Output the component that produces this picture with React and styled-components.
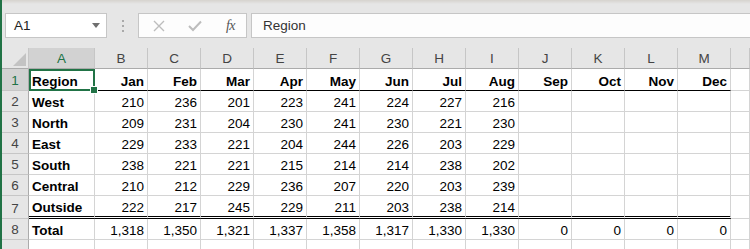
import styled, { createGlobalStyle } from "styled-components";

const GlobalStyle = createGlobalStyle`
  html, body {
    margin: 0;
    padding: 0;
    background: #e6e6e6;
  }
  body {
    font-family: "Liberation Sans", Arial, sans-serif;
  }
`;

const months = ["Jan", "Feb", "Mar", "Apr", "May", "Jun", "Jul", "Aug", "Sep", "Oct", "Nov", "Dec"];
const letters = ["A", "B", "C", "D", "E", "F", "G", "H", "I", "J", "K", "L", "M", ""];

const data = [
    ["West", 210, 236, 201, 223, 241, 224, 227, 216],
    ["North", 209, 231, 204, 230, 241, 230, 221, 230],
    ["East", 229, 233, 221, 204, 244, 226, 203, 229],
    ["South", 238, 221, 221, 215, 214, 214, 238, 202],
    ["Central", 210, 212, 229, 236, 207, 220, 203, 239],
    ["Outside", 222, 217, 245, 229, 211, 203, 238, 214],
];

const totals = ["1,318", "1,350", "1,321", "1,337", "1,358", "1,317", "1,330", "1,330", "0", "0", "0", "0"];

const App = () => {

    const rowHeights = [21, 22, 21, 21, 21, 21, 21, 23, 21, 30];

    return <>
        <GlobalStyle />
        <Window>
            <TopStrip />
            <FormulaBar>
                <NameBox>
                    <span>A1</span>
                    <svg width="8" height="5" viewBox="0 0 8 5">
                        <path d="M0 0 H8 L4 5 Z" fill="#6f6f6f" />
                    </svg>
                </NameBox>
                <Grip>
                    <i /><i /><i />
                </Grip>
                <ButtonBox>
                    <svg width="12" height="12" viewBox="0 0 12 12">
                        <path d="M1 1 L11 11 M11 1 L1 11" stroke="#bdbdbd" strokeWidth="1.4" />
                    </svg>
                    <svg width="14" height="12" viewBox="0 0 14 12">
                        <path d="M1 6 L5 10 L13 1.5" stroke="#bdbdbd" strokeWidth="2" fill="none" />
                    </svg>
                    <Fx>fx</Fx>
                </ButtonBox>
                <FormulaInput>Region</FormulaInput>
            </FormulaBar>

            <Sheet style={{ gridTemplateRows: rowHeights.map((h) => h + "px").join(" ") }}>
                <Corner>
                    <svg width="13" height="13" viewBox="0 0 13 13">
                        <path d="M13 0 V13 H0 Z" fill="#c3c3c3" />
                    </svg>
                </Corner>
                {letters.map((l, i) => (
                    <ColHead key={l + i} $active={i === 0}>{l}</ColHead>
                ))}

                <RowHead $active>1</RowHead>
                <Cell $bold $left $under="single">Region</Cell>
                {months.map((m) => (
                    <Cell key={m} $bold $under="single">{m}</Cell>
                ))}
                <Cell />

                {data.map((row, r) => (
                    <Row key={row[0]} row={row} num={r + 2} last={r === data.length - 1} />
                ))}

                <RowHead>8</RowHead>
                <Cell $bold $left>Total</Cell>
                {totals.map((t, i) => (
                    <Cell key={i}>{t}</Cell>
                ))}
                <Cell />

                <RowHead>9</RowHead>
                {letters.map((l, i) => <Cell key={i} />)}
            </Sheet>
            <Selection>
                <Handle />
            </Selection>
        </Window>
    </>
}

const Row = ({ row, num, last }) => {
    const under = last ? "double" : undefined;
    return <>
        <RowHead>{num}</RowHead>
        <Cell $bold $left $under={under}>{row[0]}</Cell>
        {row.slice(1).map((v, i) => (
            <Cell key={i} $under={under}>{v}</Cell>
        ))}
        {[0, 1, 2, 3].map((i) => <Cell key={"e" + i} $under={under} />)}
        <Cell />
    </>
}

export default App;

const Window = styled.div`
    position: relative;
    width: 750px;
    height: 249px;
    overflow: hidden;
    box-sizing: border-box;
    border-left: 2px solid #217346;
    background: #e6e6e6;
`

const TopStrip = styled.div`
    height: 4px;
    background: linear-gradient(#d6d3ce, #e6e6e6);
`

const FormulaBar = styled.div`
    display: flex;
    align-items: center;
    height: 25px;
    margin-top: 9px;
    margin-bottom: 10px;
    padding-left: 3px;
`

const NameBox = styled.div`
    box-sizing: border-box;
    width: 102px;
    height: 25px;
    display: flex;
    align-items: center;
    justify-content: space-between;
    padding: 0 6px 0 8px;
    background: #fff;
    border: 1px solid #c6c6c6;
    font-size: 13.5px;
    color: #222;
`

const Grip = styled.div`
    width: 31px;
    display: flex;
    flex-direction: column;
    align-items: center;
    gap: 3px;

    i {
        display: block;
        width: 2px;
        height: 2px;
        background: #a9a9a9;
    }
`

const ButtonBox = styled.div`
    box-sizing: border-box;
    width: 109px;
    height: 25px;
    display: flex;
    align-items: center;
    justify-content: space-between;
    padding: 0 11px 0 14px;
    background: #fdfdfd;
    border: 1px solid #c6c6c6;
`

const Fx = styled.span`
    font-family: "Liberation Serif", "Times New Roman", serif;
    font-style: italic;
    font-size: 14px;
    color: #555;
    letter-spacing: -0.5px;
`

const FormulaInput = styled.div`
    box-sizing: border-box;
    flex: 1;
    height: 25px;
    margin-left: 4px;
    display: flex;
    align-items: center;
    padding-left: 11px;
    background: #fdfdfd;
    border: 1px solid #c6c6c6;
    border-right: none;
    font-size: 13.5px;
    color: #333;
`

const Sheet = styled.div`
    display: grid;
    grid-template-columns: 27px 66px repeat(12, 53px) 1fr;
    background: #fff;
    font-size: 13.5px;
`

const Corner = styled.div`
    box-sizing: border-box;
    display: flex;
    align-items: flex-end;
    justify-content: flex-end;
    padding: 0 2px 2px 0;
    background: #e6e6e6;
    border-right: 1px solid #c6c6c6;
    border-bottom: 1px solid #ababab;
`

const ColHead = styled.div`
    box-sizing: border-box;
    display: flex;
    align-items: center;
    justify-content: center;
    background: ${(p) => (p.$active ? "#d2d2d2" : "#e6e6e6")};
    color: ${(p) => (p.$active ? "#217346" : "#444")};
    border-right: 1px solid #c6c6c6;
    border-bottom: 1px solid #ababab;
`

const RowHead = styled.div`
    box-sizing: border-box;
    display: flex;
    align-items: flex-end;
    justify-content: center;
    padding-bottom: 2px;
    background: ${(p) => (p.$active ? "#d2d2d2" : "#e6e6e6")};
    color: ${(p) => (p.$active ? "#217346" : "#444")};
    border-right: 1px solid #ababab;
    border-bottom: 1px solid #c6c6c6;
`

const Cell = styled.div`
    box-sizing: border-box;
    display: flex;
    align-items: flex-end;
    justify-content: ${(p) => (p.$left ? "flex-start" : "flex-end")};
    padding: 0 3px 1px 3px;
    color: #000;
    font-weight: ${(p) => (p.$bold ? 700 : 400)};
    white-space: nowrap;
    border-right: 1px solid #d4d4d4;
    border-bottom: ${(p) =>
        p.$under === "single" ? "1px solid #000" :
        p.$under === "double" ? "3px double #000" : "1px solid #d4d4d4"};
`

const Selection = styled.div`
    position: absolute;
    left: 27px;
    top: 69px;
    width: 66px;
    height: 22px;
    box-sizing: border-box;
    border: 2px solid #217346;
    pointer-events: none;
`

const Handle = styled.div`
    position: absolute;
    right: -5px;
    bottom: -5px;
    width: 6px;
    height: 6px;
    background: #217346;
    border: 1px solid #fff;
`
